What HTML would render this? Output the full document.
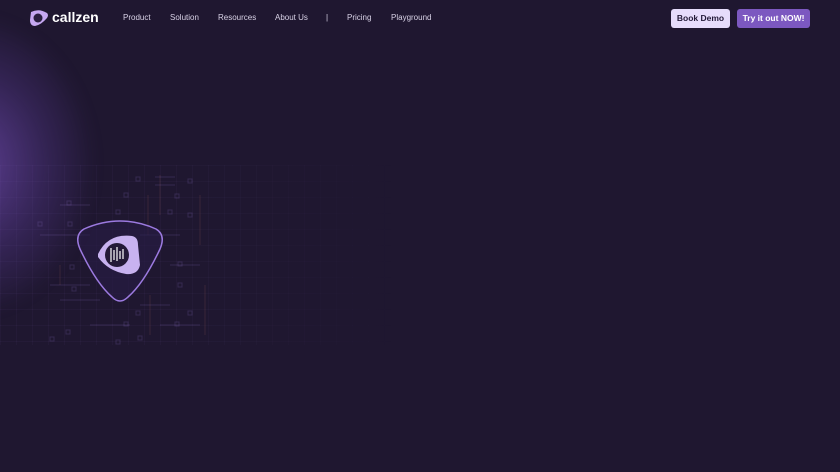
<!DOCTYPE html><html><head><style>
body{margin:0;width:840px;height:472px;background:#1f1730;font-family:"Liberation Sans",sans-serif;overflow:hidden;position:relative}
.glow{position:absolute;left:-150px;top:20px;width:240px;height:290px;border-radius:50%;background:radial-gradient(ellipse at center,rgba(120,80,190,.7) 0%,rgba(90,60,150,.35) 45%,rgba(31,23,48,0) 75%);filter:blur(8px)}
.grid{position:absolute;left:0;top:165px;width:400px;height:180px;background-image:linear-gradient(rgba(140,110,200,.05) 1px,transparent 1px),linear-gradient(90deg,rgba(140,110,200,.05) 1px,transparent 1px);background-size:16px 16px;-webkit-mask-image:linear-gradient(90deg,#000 40%,transparent 100%)}
.nav a{position:absolute;top:13px;font-size:8px;color:#d8d2e6}
.btn{position:absolute;top:9px;height:19px;border-radius:3px;font-size:8.5px;font-weight:bold;line-height:19px;text-align:center}
</style></head><body>
<div class="glow"></div>
<div class="grid"></div>
<svg style="position:absolute;left:0;top:165px" width="260" height="180">
<g stroke="rgba(150,120,210,.2)" fill="none" stroke-width="1">
<rect x="136" y="12" width="4" height="4"/><rect x="188" y="14" width="4" height="4"/><rect x="124" y="28" width="4" height="4"/><rect x="175" y="29" width="4" height="4"/><rect x="67" y="36" width="4" height="4"/><rect x="116" y="45" width="4" height="4"/><rect x="168" y="45" width="4" height="4"/><rect x="188" y="48" width="4" height="4"/><rect x="38" y="57" width="4" height="4"/><rect x="68" y="57" width="4" height="4"/><rect x="178" y="97" width="4" height="4"/><rect x="70" y="100" width="4" height="4"/><rect x="72" y="122" width="4" height="4"/><rect x="178" y="118" width="4" height="4"/><rect x="136" y="146" width="4" height="4"/><rect x="188" y="146" width="4" height="4"/><rect x="124" y="157" width="4" height="4"/><rect x="175" y="157" width="4" height="4"/><rect x="66" y="165" width="4" height="4"/><rect x="116" y="175" width="4" height="4"/><rect x="138" y="171" width="4" height="4"/><rect x="50" y="172" width="4" height="4"/>
<path d="M155 12h20M155 20h20M60 40h30M40 70h50M140 70h40M170 100h30M50 120h40M60 135h40M140 140h30M160 160h40M90 160h40"/>
<path d="M148 30v40M160 10v40M200 30v50M205 120v50M150 130v40M60 100v20" stroke="rgba(200,120,100,.15)"/>
</g></svg>
<svg style="position:absolute;left:74px;top:217px" width="94" height="88" viewBox="0 0 94 88">
<path d="M10 12 Q46 -4 82 12 Q92 18 86 32 Q70 66 54 80 Q46 88 38 80 Q22 66 6 32 Q0 18 10 12Z" fill="rgba(40,28,70,.6)" stroke="#9c7ae0" stroke-width="1.5"/>
<path d="M24 37 Q34 16 58 19 Q64 20 64 28 L66 48 Q64 58 52 57 Q34 54 24 40Z" fill="#c8b2f0"/>
<circle cx="43" cy="38" r="12" fill="#241a38"/>
<path d="M37 31v14M40 33v10M43 30v14M46 34v8M49 32v10" stroke="#fff" stroke-width="1.2"/>
</svg>
<svg style="position:absolute;left:29px;top:9px" width="20" height="18" viewBox="0 0 20 18">
<path d="M2 3 Q10 -1 18 4 Q20 6 18 9 Q12 16 6 17 Q1 17 1 11Z" fill="#c6a8f2"/><circle cx="9" cy="9" r="4.5" fill="#2a1f40"/></svg>
<div style="position:absolute;left:52px;top:9px;font-size:14px;font-weight:bold;color:#fff">callzen</div>
<div class="nav"><a style="left:123px">Product</a><a style="left:170px">Solution</a><a style="left:218px">Resources</a><a style="left:275px">About Us</a><a style="left:326px">|</a><a style="left:347px">Pricing</a><a style="left:391px">Playground</a></div>
<div class="btn" style="left:671px;width:59px;background:#e6dcfb;color:#231a38">Book Demo</div>
<div class="btn" style="left:737px;width:73px;background:#7c58c0;color:#fff">Try it out NOW!</div>
</body></html>
